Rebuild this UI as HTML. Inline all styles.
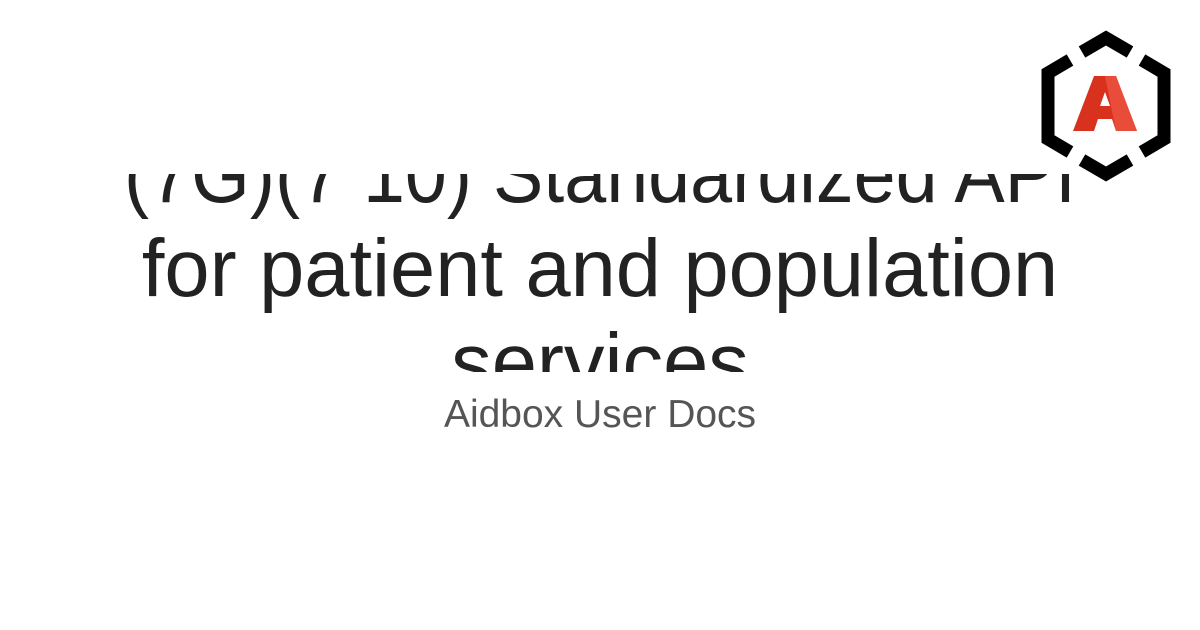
<!DOCTYPE html>
<html><head><meta charset="utf-8"><style>
html,body{margin:0;padding:0;background:#fff;width:1200px;height:630px;overflow:hidden;font-family:"Liberation Sans",sans-serif}
.clip{position:absolute;left:0;top:174px;width:1200px;height:198px;overflow:hidden}
.ln{position:absolute;left:0;width:1200px;text-align:center;font-size:82px;color:#222;line-height:1;transform:scaleX(0.99);transform-origin:600px 0;white-space:nowrap}
.sub{position:absolute;left:0;width:1200px;top:393px;text-align:center;font-size:39px;color:#555;transform:scaleX(1.0);transform-origin:600px 0}
</style></head><body>
<div class="clip">
<div class="ln" style="top:-40px;transform:scaleX(0.92)">(7G)(7 10) Standardized API</div>
<div class="ln" style="top:54px">for patient and population</div>
<div class="ln" style="top:148px">services</div>
</div>
<div class="sub">Aidbox User Docs</div>
<svg style="position:absolute;left:0;top:0" width="1200" height="630">
<g fill="none" stroke="#000" stroke-width="13" stroke-linejoin="miter">
<polyline points="1082,52 1106,38 1130,52"/>
<polyline points="1082,160 1106,174 1130,160"/>
<polyline points="1070,60 1048,73 1048,139 1070,152"/>
<polyline points="1142,60 1164,73 1164,139 1142,152"/>
</g>
<polygon points="1094,76 1116,76 1137,131 1116,131 1112,119 1098,119 1094,131 1073,131" fill="#d8321f"/>
<polygon points="1105,76 1116,76 1137,131 1116,131" fill="#ea4c3a"/>
<polygon points="1100,106 1110,106 1105,92" fill="#fff"/>
</svg>
</body></html>
